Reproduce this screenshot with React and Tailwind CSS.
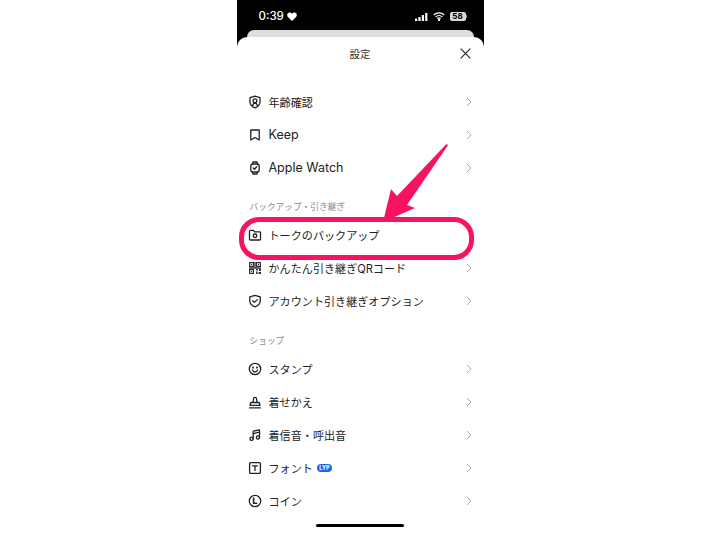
const font = { fontFamily: '"Inter","Noto Sans CJK JP",sans-serif' };

const I = ({ children }) => (
  <svg width="14" height="14" viewBox="0 0 14 14" fill="none" stroke="#222" strokeWidth="1.3" strokeLinecap="round" strokeLinejoin="round" className="shrink-0">
    {children}
  </svg>
);

const icons = {
  age: (<I><path d="M7 1.2 12 2.6V7c0 3-2.200 4.800-5 5.800C4.200 11.800 2 10 2 7V2.600Z" /><circle cx="7" cy="5.800" r="1.900" /><path d="M4.600 10.600c.3-1.500 1.200-2.400 2.400-2.400s2.100.9 2.400 2.400" /></I>),
  keep: (<I><path d="M2.800 2h8.400v10L7 9.500 2.800 12Z" /></I>),
  watch: (<I><rect x="2.800" y="3" width="8.400" height="8" rx="2.200" /><path d="M4.500 3 5 1h4l.5 2M4.500 11 5 13h4l.5-2M5.300 7l1.200 1.200 2.200-2.400" /></I>),
  backup: (<I><path d="M1.500 3.200c0-.5.3-.8.800-.8h3l1.200 1.400h5.200c.5 0 .8.300.8.800v6.600c0 .5-.3.800-.8.800H2.300c-.5 0-.8-.3-.8-.8Z" /><circle cx="7" cy="7.800" r="1.800" /></I>),
  qr: (
    <svg width="14" height="14" viewBox="0 0 14 14" fill="#333" className="shrink-0">
      <path d="M1 1h5v5H1Zm1.200 1.200v2.600h2.600V2.200ZM8 1h5v5H8Zm1.200 1.200v2.600h2.600V2.200ZM1 8h5v5H1Zm1.200 1.200v2.600h2.600V9.200ZM3 3h1v1H3Zm7 0h1v1h-1ZM3 10h1v1H3ZM8 8h2v1.500H8Zm3 0h2v2h-2ZM8 10.500h1.500V13H8Zm2.500.5H13v2h-2.500ZM6.300 1h1.400v5H6.300Zm-5.300 5.300h12v1.400H1Z" />
    </svg>
  ),
  shield: (<I><path d="M7 1.400 12.200 2.800V7c0 3-2.300 4.800-5.200 5.800C4.100 11.800 1.800 10 1.800 7V2.800Z" /><path d="m4.800 6.800 1.600 1.600 2.900-2.800" /></I>),
  stamp: (<I><circle cx="7" cy="7" r="5.700" /><circle cx="5" cy="5.600" r=".4" /><circle cx="9" cy="5.600" r=".4" /><path d="M4.400 8c.5 1.300 1.500 2 2.600 2s2.100-.7 2.600-2" /></I>),
  theme: (<I><path d="M5 7.500 5.500 3.800a1.500 1.500 0 1 1 3 0L9 7.500M2.800 7.500h8.400l.8 2.800H2ZM1.500 12.800h11" /></I>),
  music: (<I><path d="M5.200 10.800V3.200l6.300-1.400v7.600" /><circle cx="3.600" cy="10.800" r="1.600" /><circle cx="9.900" cy="9.400" r="1.600" /><path d="M5.200 5.600 11.500 4.200" /></I>),
  font: (<I><rect x="1.600" y="1.600" width="10.800" height="10.800" rx="1" /><path d="M4.500 4.800h5M7 4.800v4.800" /></I>),
  coin: (<I><circle cx="7" cy="7" r="5.700" /><path d="M5.600 4v5.200h3" strokeWidth="1.600" /></I>),
};

const Row = ({ icon, label, latin, badge, chevron = true }) => (
  <div className="h-[33px] flex items-center pl-[11px] pr-[12px]">
    {icons[icon]}
    <span className={latin ? "ml-[7px] mt-[2px] text-[12.500px] leading-none text-[#222] whitespace-nowrap" : "ml-[7px] mt-[4px] text-[11.100px] leading-none text-[#222] whitespace-nowrap"}>{label}</span>
    {badge && (
      <span className="ml-[4px] w-[15px] h-[8px] rounded-full bg-[#2563eb] text-white text-[5.500px] leading-[8px] font-bold text-center">LYP</span>
    )}
    {chevron && (
      <svg width="6" height="10" viewBox="0 0 6 10" fill="none" stroke="#a8a8a8" strokeWidth="1" className="ml-auto">
        <path d="m1 1 4 4-4 4" />
      </svg>
    )}
  </div>
);

const Head = ({ children, className }) => (
  <div className={`pl-[13px] mb-[5px] text-[8.700px] leading-[12px] text-[#8a8a8a] ${className}`}>{children}</div>
);

export default function App() {
  return (
    <div className="relative w-[720px] h-[534px] bg-white flex justify-center overflow-hidden" style={font}>
      <div className="w-[247px] h-[534px] bg-black flex flex-col">
        <div className="h-[30px] shrink-0 flex items-center justify-between pl-[22px] pr-[17px] pt-[3px] text-white">
          <div className="flex items-center gap-[3px]">
            <span className="text-[11.500px] font-medium leading-none">0:39</span>
            <svg width="10" height="9" viewBox="0 0 10 9" fill="white"><path d="M5 9 .9 4.900C-.5 3.300.3.500 2.600.500 3.600.500 4.500 1 5 1.900 5.500 1 6.400.500 7.400.500c2.300 0 3.100 2.800 1.700 4.400Z" /></svg>
          </div>
          <div className="flex items-center gap-[5px]">
            <svg width="13" height="8" viewBox="0 0 13 8" fill="white"><rect x="0" y="5.500" width="2.200" height="2.500" /><rect x="3.400" y="4" width="2.200" height="4" /><rect x="6.800" y="2" width="2.200" height="6" /><rect x="10.200" y="0" width="2.200" height="8" /></svg>
            <svg width="12" height="9" viewBox="0 0 12 9" fill="none" stroke="white" strokeWidth="1.300"><path d="M.8 3a7.500 7.500 0 0 1 10.400 0M2.600 4.900a5 5 0 0 1 6.800 0M4.300 6.600a2.500 2.500 0 0 1 3.400 0" /><circle cx="6" cy="8" r=".5" fill="white" /></svg>
            <div className="flex items-center">
              <div className="w-[16px] h-[9px] rounded-[2px] bg-[#d8d8d8] text-black text-[8px] font-bold leading-[9px] text-center">58</div>
              <div className="w-[1px] h-[3px] bg-[#888]" />
            </div>
          </div>
        </div>
        <div className="mx-[10px] h-[7px] shrink-0 rounded-t-[8px] bg-[#dedede]" />
        <div className="flex-1 bg-white rounded-t-[10px] flex flex-col">
          <div className="h-[34px] shrink-0 flex items-center justify-center relative">
            <span className="mt-[2px] text-[10.500px] text-[#333] leading-none">設定</span>
            <svg width="11" height="11" viewBox="0 0 11 11" fill="none" stroke="#222" strokeWidth="1.100" className="absolute right-[13px] top-[11px]"><path d="m.7.7 9.600 9.600M10.300.7.700 10.300" /></svg>
          </div>
          <div className="h-[14px] shrink-0" />
          <Row icon="age" label="年齢確認" />
          <Row icon="keep" label="Keep" latin />
          <Row icon="watch" label="Apple Watch" latin />
          <Head className="mt-[17px]">バックアップ・引き継ぎ</Head>
          <Row icon="backup" label="トークのバックアップ" chevron={false} />
          <Row icon="qr" label="かんたん引き継ぎQRコード" />
          <Row icon="shield" label="アカウント引き継ぎオプション" />
          <Head className="mt-[18px]">ショップ</Head>
          <Row icon="stamp" label="スタンプ" />
          <Row icon="theme" label="着せかえ" />
          <Row icon="music" label="着信音・呼出音" />
          <Row icon="font" label="フォント" badge />
          <Row icon="coin" label="コイン" />
          <div className="mt-auto mb-[7px] mx-auto w-[88px] h-[3px] rounded-full bg-black" />
        </div>
      </div>
      <div className="absolute left-[239px] top-[217px] w-[235px] h-[43px] rounded-[20px] border-[5.500px] border-[#f7135f]" />
      <svg width="80" height="84" viewBox="0 0 80 84" className="absolute left-[375px] top-[142px]">
        <path d="M71 2.500 C72.500 1.500 73.500 3 72.500 4 L32 63 L40 66 L8 80 L16 47 L22 54 Z" fill="#f7135f" />
      </svg>
    </div>
  );
}
